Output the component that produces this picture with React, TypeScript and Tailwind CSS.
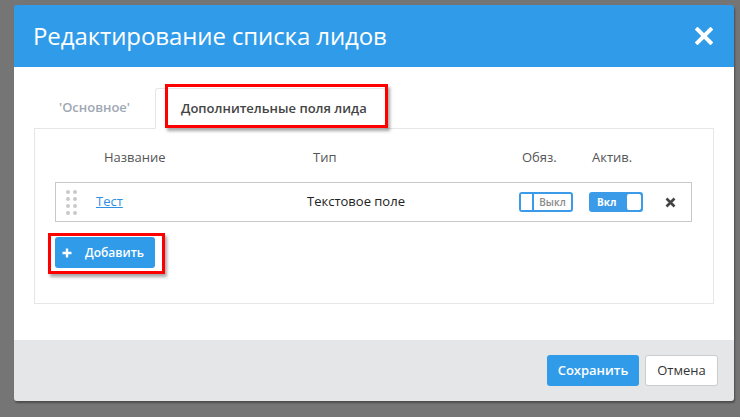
import React from "react";

const font = { fontFamily: '"Open Sans", "Liberation Sans", sans-serif' };

function DragHandle() {
  return (
    <div className="grid grid-cols-2 gap-x-[3px] gap-y-[3px] w-[10px]">
      {Array.from({ length: 8 }).map((_, i) => (
        <span key={i} className="block w-[4px] h-[4px] rounded-full bg-[#c9c9c9]" />
      ))}
    </div>
  );
}

function ToggleOff() {
  return (
    <div className="flex h-[20px] w-[54px] rounded-[3px] border-2 border-[#3b9be8] bg-white overflow-hidden">
      <div className="w-[13px] h-full bg-white border-r-2 border-[#3b9be8]" />
      <div className="flex-1 flex items-center justify-center text-[10px] font-semibold text-[#8a8a8a] leading-none">Выкл</div>
    </div>
  );
}

function ToggleOn() {
  return (
    <div className="flex h-[20px] w-[54px] rounded-[3px] border-2 border-[#3b9be8] bg-[#3b9be8] overflow-hidden">
      <div className="flex-1 flex items-center pl-[6px] text-[10px] font-bold text-white leading-none">Вкл</div>
      <div className="w-[14px] h-full bg-white rounded-[2px]" />
    </div>
  );
}

export default function App() {
  return (
    <div className="w-[740px] h-[417px] bg-[#757575] pt-[5px] pl-[14px] overflow-hidden" style={font}>
      <div className="w-[720px] h-[396px] flex flex-col rounded-[3px] overflow-hidden shadow-[1px_2px_2px_rgba(0,0,0,0.35)]">
        {/* Header */}
        <div className="h-[62px] bg-[#2f9be9] flex items-center justify-between pl-[19px] pr-[21px] shrink-0">
          <div className="text-white text-[24px] leading-none font-normal tracking-[-0.1px]">Редактирование списка лидов</div>
          <svg width="18" height="18" viewBox="0 0 18 18">
            <path d="M2.5 2.5 L15.5 15.5 M15.5 2.5 L2.5 15.5" stroke="white" strokeWidth="4" strokeLinecap="square" />
          </svg>
        </div>

        {/* Body */}
        <div className="flex-1 bg-white px-[20px] pt-[21px]">
          {/* Tabs */}
          <div className="flex h-[40px] items-end">
            <div className="w-[121px] h-[40px] flex items-center justify-center text-[13px] font-semibold text-[#a0a7b4]">'Основное'</div>
            <div className="relative w-[231px] h-[41px] -mb-px border border-[#e6e6e6] border-b-white bg-white rounded-t-[3px] flex items-center pl-[25px] z-10">
              <span className="text-[13px] font-semibold text-[#444] whitespace-nowrap">Дополнительные поля лида</span>
              <div className="absolute left-[9px] top-[-5px] w-[223px] h-[44px] border-[3px] border-[#ff0000] shadow-[2px_3px_3px_rgba(0,0,0,0.35)]" />
            </div>
          </div>

          {/* Panel */}
          <div className="border border-[#e6e6e6] h-[176px] pt-[20px] pl-[20px] pr-[21px]">
            <div className="flex h-[18px] items-center text-[13px] text-[#555] pl-[49px]">
              <div className="w-[209px]">Название</div>
              <div className="w-[209px]">Тип</div>
              <div className="w-[70px]">Обяз.</div>
              <div>Актив.</div>
            </div>
            <div className="mt-[15px] h-[40px] border border-[#c8c8c8] flex items-center pl-[10px]">
              <DragHandle />
              <div className="w-[211px] ml-[20px] text-[13px] text-[#2f8fe0] underline">Тест</div>
              <div className="w-[212px] text-[13px] text-[#222]">Текстовое поле</div>
              <div className="w-[70px]"><ToggleOff /></div>
              <div className="w-[76px]"><ToggleOn /></div>
              <svg width="11" height="11" viewBox="0 0 11 11">
                <path d="M1.5 1.5 L9.5 9.5 M9.5 1.5 L1.5 9.5" stroke="#444" strokeWidth="2.6" />
              </svg>
            </div>
            <div className="mt-[15px] relative w-[100px]">
              <button className="w-[100px] h-[31px] rounded-[3px] bg-[#2f9be9] flex items-center pl-[7px] text-white text-[12px] font-semibold">
                <svg width="10" height="10" viewBox="0 0 10 10">
                  <path d="M5 0.5 V9.5 M0.5 5 H9.5" stroke="white" strokeWidth="2.4" />
                </svg>
                <span className="ml-[13px]">Добавить</span>
              </button>
              <div className="absolute left-[-7px] top-[-4px] w-[117px] h-[41px] border-[3px] border-[#ff0000] shadow-[2px_3px_3px_rgba(0,0,0,0.35)]" />
            </div>
          </div>
        </div>

        {/* Footer */}
        <div className="h-[61px] bg-[#e5e6e8] flex justify-end items-start pt-[15px] pr-[16px] gap-[6px] shrink-0">
          <button className="w-[92px] h-[31px] rounded-[3px] bg-[#2f9be9] text-white text-[13px] font-semibold">Сохранить</button>
          <button className="w-[73px] h-[31px] rounded-[3px] bg-white border border-[#cccccc] text-[#333] text-[13px]">Отмена</button>
        </div>
      </div>
    </div>
  );
}
